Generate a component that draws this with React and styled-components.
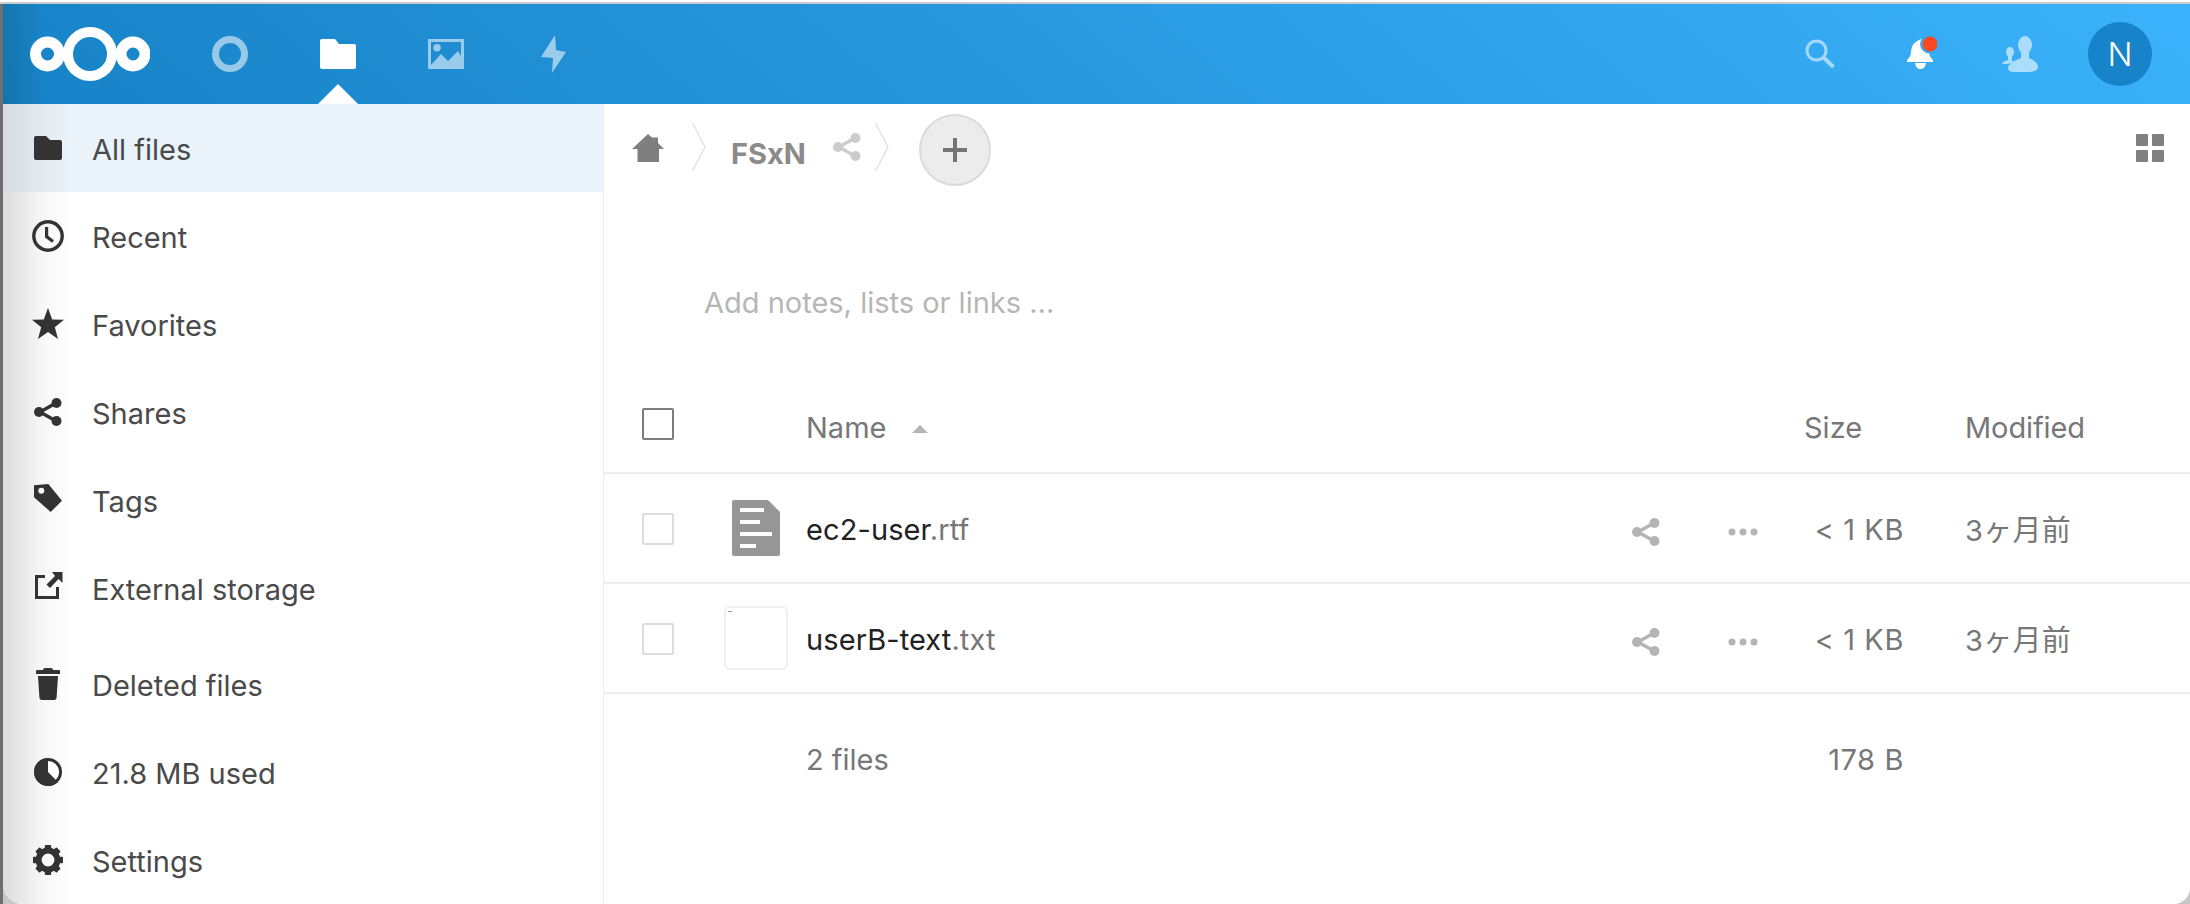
import React from "react";
import styled, { createGlobalStyle } from "styled-components";

const Global = createGlobalStyle`
  html, body { margin: 0; padding: 0; background: #fff; }
  * { box-sizing: border-box; }
  #root { width: 2190px; height: 904px; overflow: hidden; }
`;

const Page = styled.div`
  width: 2190px; height: 904px; display: flex; flex-direction: column;
  font-family: Inter, "Noto Sans CJK JP", sans-serif; overflow: hidden; background: #fff;
`;
const TopEdge = styled.div`height: 4px; flex: none; background: #fdfdfd; border-bottom: 2px solid #cbcbcb;`;
const Shell = styled.div`flex: 1; min-height: 0; display: flex; border-left: 3px solid #6f6f6f; background: #c6c6c6;`;
const Win = styled.div`
  flex: 1; min-width: 0; display: flex; flex-direction: column; background: #fff; overflow: hidden;
  border-radius: 0 0 16px 20px;
`;
const Header = styled.header`
  height: 100px; flex: none; display: flex; align-items: center; padding: 0 20px 0 27px;
  background: linear-gradient(to right, rgba(0,0,0,.12), rgba(0,0,0,0) 40px), linear-gradient(40deg, #1782c6 0%, #3bb2fb 100%);
`;
const Logo = styled.svg`width: 120px; height: 56px; margin-right: 26px; flex: none;`;
const AppCell = styled.div`
  position: relative; width: 108px; height: 100px; display: flex; align-items: center; justify-content: center;
  color: #fff; opacity: ${p => (p.$active ? 1 : 0.55)}; 
`;
const Caret = styled.span`
  position: absolute; bottom: 0; left: 34px; width: 0; height: 0;
  border-left: 20px solid transparent; border-right: 20px solid transparent; border-bottom: 20px solid #fff;
`;
const Spacer = styled.div`flex: 1;`;
const ToolCell = styled.div`
  width: 100px; height: 100px; display: flex; align-items: center; justify-content: center;
`;
const Avatar = styled.div`
  width: 64px; height: 64px; border-radius: 50%; background: #1783c8; color: #fff; font-size: 33px;
  display: flex; align-items: center; justify-content: center; font-weight: 300;
`;
const Body = styled.div`flex: 1; min-height: 0; display: flex;`;
const Sidebar = styled.nav`
  width: 601px; flex: none; border-right: 1px solid #ededed; display: flex; flex-direction: column;
  background: linear-gradient(to right, #dcdcdc, #f6f6f6 38px, #fff 68px);
`;
const NavRow = styled.div`
  height: 88px; flex: none; display: flex; align-items: center; padding-left: 29px; gap: 28px;
  margin-top: ${p => p.$gap || 0}px; font-size: 29px; color: #4a4a4a;
  background: ${p => (p.$active ? "linear-gradient(to right, #d6dce1, #ebf3fa 68px)" : "transparent")};
`;
const NavIcon = styled.svg`width: 32px; height: 32px; flex: none; color: #333;`;
const NavLabel = styled.span`margin-top: 3px;`;
const Main = styled.main`flex: 1; min-width: 0; display: flex; flex-direction: column;`;
const Crumbs = styled.div`height: 88px; flex: none; display: flex; align-items: center; padding: 0 26px 0 28px;`;
const HomeIcon = styled.svg`width: 32px; height: 28px; flex: none; color: #7f7f7f;`;
const Chevron = styled.svg`width: 14px; height: 48px; flex: none; margin-left: ${p => p.$ml}px; margin-top: -2px;`;
const CrumbName = styled.span`font-size: 29px; font-weight: 700; color: #8b8b8b; margin-left: 25px; margin-top: 10px;`;
const CrumbShare = styled.svg`width: 28px; height: 28px; margin-left: 27px; color: #cccccc; flex: none; margin-top: -2px;`;
const AddButton = styled.div`
  width: 72px; height: 72px; flex: none; margin-left: 30px; margin-top: 4px; border-radius: 50%;
  background: #ececec; border: 2px solid #dbdbdb; display: flex; align-items: center; justify-content: center; color: #757575;
`;
const GridIcon = styled.svg`width: 28px; height: 28px; flex: none; color: #808080;`;
const Notes = styled.div`
  height: 198px; flex: none; padding: 70px 0 0 100px; font-size: 29px; color: #b6b6b6; line-height: 82px;
`;
const Row = styled.div`
  display: grid; grid-template-columns: 120px 82px 800px 80px 114px 104px 1fr; align-items: center;
  height: ${p => p.$h}px; flex: none; font-size: 29px; color: #777;
  border-bottom: ${p => (p.$plain ? "none" : "2px solid #eeeeee")};
  --shift: ${p => p.$shift}px;
`;
const TextCell = styled.div`margin-top: var(--shift);`;
const FileName = styled(TextCell)`letter-spacing: 0.1px;`;
const Check = styled.span`
  width: 32px; height: 32px; margin-left: 38px; margin-top: ${p => (p.$strong ? -14 : 2)}px; border-radius: 2px; display: block;
  border: 2px solid ${p => (p.$strong ? "#7d7d7d" : "#dcdcdc")};
`;
const ThumbCell = styled.div`display: flex; align-items: center;`;
const DocIcon = styled.svg`width: 48px; height: 56px; margin-left: 8px; flex: none;`;
const BlankThumb = styled.div`
  width: 64px; height: 64px; border: 2px solid #efefef; border-radius: 6px; position: relative;
`;
const ThumbDash = styled.span`position: absolute; left: 2px; top: 3px; width: 4px; height: 1px; background: #999;`;
const NameCell = styled(TextCell)`display: flex; align-items: center; gap: 18px;`;
const Stem = styled.span`color: #222;`;
const SortCaret = styled.span`
  width: 0; height: 0; margin-left: 8px; margin-top: 4px;
  border-left: 8px solid transparent; border-right: 8px solid transparent; border-bottom: 8px solid #b5b5b5;
`;
const ActionCell = styled.div`display: flex; align-items: center; justify-content: center; color: #b4b4b4; margin-top: 8px;`;
const ActionIcon = styled.svg`width: 28px; height: 28px;`;
const SizeCell = styled(TextCell)`
  text-align: ${p => (p.$left ? "left" : "right")}; padding-left: ${p => (p.$left ? 4 : 0)}px;
  letter-spacing: ${p => (p.$left ? 0 : 0.6)}px;
`;
const DateCell = styled(TextCell)`
  padding-left: 61px;
  letter-spacing: ${p => (p.$cjk ? 0.3 : -0.1)}px;
  margin-top: ${p => (p.$cjk ? "0" : "var(--shift)")};
`;

const FolderPath = () => <path d="M2 0 L12 0 L16 4 L26 4 Q28 4 28 6 V22 Q28 24 26 24 H2 Q0 24 0 22 V2 Q0 0 2 0 Z" fill="currentColor" />;

const ShareGlyph = () => (
  <g>
    <path d="M22 5 L6 14 L22 23" fill="none" stroke="currentColor" strokeWidth="3.4" />
    <circle cx="22.5" cy="5" r="5" fill="currentColor" />
    <circle cx="5" cy="14" r="5" fill="currentColor" />
    <circle cx="22.5" cy="23" r="5" fill="currentColor" />
  </g>
);

const icons = {
  folder: <g transform="translate(2 4)"><FolderPath /></g>,
  clock: (
    <g fill="none" stroke="currentColor">
      <circle cx="16" cy="16" r="14.2" strokeWidth="3.4" />
      <path d="M14.6 7 V16.6 L21 21.5" strokeWidth="3.2" />
    </g>
  ),
  star: <polygon points="16,0 20.2,11.4 32,11.8 22.8,19.2 26,31 16,24 6,31 9.2,19.2 0,11.8 11.8,11.4" fill="currentColor" />,
  share: <g transform="translate(2 2)"><ShareGlyph /></g>,
  tag: (
    <path fillRule="evenodd" fill="currentColor" d="M2 1.300 L16.300 0 L30 16.700 L18.700 28 L2 13.300 Z M9.300 3.700 A3 3 0 1 0 9.300 9.700 A3 3 0 1 0 9.300 3.700 Z" />
  ),
  external: (
    <g>
      <path d="M13 4.500 H4.500 V25.500 H25.500 V15" fill="none" stroke="currentColor" strokeWidth="3" />
      <path d="M20 0 H30.500 V11 L26.500 7 L18 16 L14.500 12.500 L23 4 Z" fill="currentColor" />
    </g>
  ),
  trash: (
    <g fill="currentColor">
      <path d="M13 0 H19 Q21 0 21 2 H27 Q28 2 28 3 V6 H4 V3 Q4 2 5 2 H11 Q11 0 13 0 Z" />
      <path d="M6 8 H26 L24.6 29.5 Q24.4 32 22 32 H10 Q7.6 32 7.4 29.5 Z" />
    </g>
  ),
  pie: (
    <g>
      <circle cx="16" cy="16" r="12.5" fill="#fff" stroke="#333" strokeWidth="3" />
      <path d="M16 2 A14 14 0 1 0 26 26 L16 16 Z" fill="currentColor" />
    </g>
  ),
  gear: (
    <g fill="currentColor">
      <circle cx="16" cy="16" r="9.4" fill="none" stroke="currentColor" strokeWidth="6" />
      {[0, 45, 90, 135, 180, 225, 270, 315].map(a => (
        <rect key={a} x="12.8" y="1" width="6.4" height="7" rx="1" transform={`rotate(${a} 16 16)`} />
      ))}
    </g>
  ),
};

const nav = [
  { k: "folder", t: "All files", active: true },
  { k: "clock", t: "Recent" },
  { k: "star", t: "Favorites" },
  { k: "share", t: "Shares" },
  { k: "tag", t: "Tags" },
  { k: "external", t: "External storage" },
  { k: "trash", t: "Deleted files", gap: 8 },
  { k: "pie", t: "21.8 MB used" },
  { k: "gear", t: "Settings" },
];

const files = [
  { stem: "ec2-user", ext: ".rtf", doc: true },
  { stem: "userB-text", ext: ".txt" },
];

export default function App() {
  return (
    <Page>
      <Global />
      <TopEdge />
      <Shell>
        <Win>
          <Header>
            <Logo viewBox="0 0 120 56">
              <g fill="none" stroke="#fff">
                <circle cx="60" cy="28" r="22" strokeWidth="10" />
                <circle cx="17.5" cy="28" r="12" strokeWidth="11" />
                <circle cx="103" cy="28" r="12" strokeWidth="11" />
              </g>
            </Logo>
            <AppCell>
              <svg width="36" height="36" viewBox="0 0 36 36"><circle cx="18" cy="18" r="14.5" fill="none" stroke="currentColor" strokeWidth="7" /></svg>
            </AppCell>
            <AppCell $active>
              <svg width="36" height="32" viewBox="0 0 36 32">
                <path d="M2 1 H15 L19 6 H34 Q36 6 36 8 V29 Q36 31 34 31 H2 Q0 31 0 29 V3 Q0 1 2 1 Z" fill="currentColor" />
              </svg>
              <Caret />
            </AppCell>
            <AppCell>
              <svg width="36" height="32" viewBox="0 0 36 32">
                <path fillRule="evenodd" fill="currentColor" d="M0 1 H36 V31 H0 Z M3 4 V27 L13 16 L20 23 L30 13 L33 18 V4 Z M9 6 A3.8 3.8 0 1 1 9 13.6 A3.8 3.8 0 1 1 9 6 Z" />
              </svg>
            </AppCell>
            <AppCell>
              <svg width="26" height="38" viewBox="0 0 26 38"><path d="M14 0 L15 15 L25 17 L11 38 L12 23 L0 22 Z" fill="currentColor" /></svg>
            </AppCell>
            <Spacer />
            <ToolCell>
              <svg width="30" height="30" viewBox="0 0 30 30" fill="none" stroke="#a3dafb">
                <circle cx="11.5" cy="11.5" r="9.5" strokeWidth="3" />
                <path d="M18.5 18.5 L28.5 28" strokeWidth="4" />
              </svg>
            </ToolCell>
            <ToolCell>
              <svg width="34" height="36" viewBox="0 0 34 36">
                <path d="M18 3 Q9 6 8 15 Q8 21 4 24 V26 H30 V24 Q26 21 26 15 Q26 6 18 3 Z" fill="#fff" />
                <path d="M12 27 H23 Q22 33 17.500 33 Q13 33 12 27 Z" fill="#fff" />
                <circle cx="26.500" cy="8" r="9.500" fill="#35abf2" />
                <circle cx="27" cy="8" r="7.500" fill="#f9481f" />
              </svg>
            </ToolCell>
            <ToolCell>
              <svg width="36" height="36" viewBox="0 0 36 36" fill="#abdefd">
                <ellipse cx="23" cy="9" rx="7" ry="9" />
                <path d="M19 16 H27 V22 Q36 26 36 31 Q36 36 26 36 H12 Q6 36 6 32 Q6 27 19 22 Z" />
                <ellipse cx="8" cy="16" rx="4" ry="5" />
                <path d="M6 20 H10 V25 L13 26 Q6 28 5 28 H2 Q-1 28 1 26 L6 24 Z" />
              </svg>
            </ToolCell>
            <ToolCell><Avatar>N</Avatar></ToolCell>
          </Header>
          <Body>
            <Sidebar>
              {nav.map(n => (
                <NavRow key={n.t} $active={n.active} $gap={n.gap}>
                  <NavIcon viewBox="0 0 32 32">{icons[n.k]}</NavIcon>
                  <NavLabel>{n.t}</NavLabel>
                </NavRow>
              ))}
            </Sidebar>
            <Main>
              <Crumbs>
                <HomeIcon viewBox="0 0 32 28">
                  <path d="M16 0 L20 3.500 H26 V9 L32 15 H27 V28 H5.500 V15 H0 Z" fill="currentColor" />
                </HomeIcon>
                <Chevron $ml={28} viewBox="0 0 14 48"><path d="M0.500 0 L13 24 L0.500 48" fill="none" stroke="#dddddd" strokeWidth="1.200" /></Chevron>
                <CrumbName>FSxN</CrumbName>
                <CrumbShare viewBox="0 0 28 28"><ShareGlyph /></CrumbShare>
                <Chevron $ml={14} viewBox="0 0 14 48"><path d="M0.500 0 L13 24 L0.500 48" fill="none" stroke="#dddddd" strokeWidth="1.200" /></Chevron>
                <AddButton>
                  <svg width="24" height="24" viewBox="0 0 24 24"><path d="M0 12 H24 M12 0 V24" stroke="currentColor" strokeWidth="4" /></svg>
                </AddButton>
                <Spacer />
                <GridIcon viewBox="0 0 28 28" fill="currentColor">
                  <rect width="12" height="12" rx="1" />
                  <rect x="16" width="12" height="12" rx="1" />
                  <rect y="16" width="12" height="12" rx="1" />
                  <rect x="16" y="16" width="12" height="12" rx="1" />
                </GridIcon>
              </Crumbs>
              <Notes>Add notes, lists or links ...</Notes>
              <Row $h={84} $shift={-8}>
                <div><Check $strong /></div>
                <div />
                <NameCell>Name<SortCaret /></NameCell>
                <div />
                <div />
                <SizeCell $left>Size</SizeCell>
                <DateCell>Modified</DateCell>
              </Row>
              {files.map(f => (
                <Row key={f.stem} $h={110} $shift={2}>
                  <div><Check /></div>
                  <ThumbCell>
                    {f.doc ? (
                      <DocIcon viewBox="0 0 48 56">
                        <path d="M2 0 H36 L48 12 V54 Q48 56 46 56 H2 Q0 56 0 54 V2 Q0 0 2 0 Z" fill="#969696" />
                        <g fill="#fff">
                          <rect x="8" y="8" width="24" height="4" />
                          <rect x="8" y="20" width="20" height="4" />
                          <rect x="8" y="32" width="32" height="4" />
                          <rect x="8" y="44" width="16" height="4" />
                        </g>
                      </DocIcon>
                    ) : (
                      <BlankThumb><ThumbDash /></BlankThumb>
                    )}
                  </ThumbCell>
                  <FileName><Stem>{f.stem}</Stem>{f.ext}</FileName>
                  <ActionCell><ActionIcon viewBox="0 0 28 28"><ShareGlyph /></ActionIcon></ActionCell>
                  <ActionCell>
                    <svg width="30" height="8" viewBox="0 0 30 8" fill="currentColor">
                      <circle cx="4" cy="4" r="3.500" /><circle cx="15" cy="4" r="3.500" /><circle cx="26" cy="4" r="3.500" />
                    </svg>
                  </ActionCell>
                  <SizeCell>&lt; 1 KB</SizeCell>
                  <DateCell $cjk>3ヶ月前</DateCell>
                </Row>
              ))}
              <Row $h={132} $plain $shift={-2}>
                <div />
                <div />
                <TextCell>2 files</TextCell>
                <div />
                <div />
                <SizeCell>178 B</SizeCell>
                <div />
              </Row>
            </Main>
          </Body>
        </Win>
      </Shell>
    </Page>
  );
}
